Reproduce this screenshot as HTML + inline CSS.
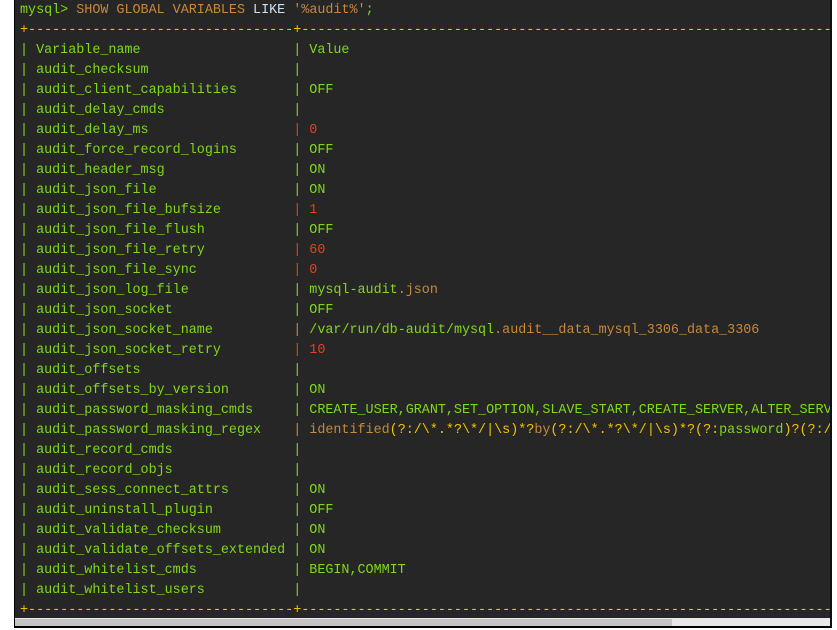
<!DOCTYPE html>
<html><head><meta charset="utf-8"><style>
html,body{margin:0;padding:0;width:837px;height:630px;overflow:hidden;background:#fff}
#t{position:absolute;left:15px;top:0;width:816px;height:618px;background:#262626;overflow:hidden}
pre{margin:0;position:absolute;left:5px;top:1px;font-family:"Liberation Mono",monospace;font-size:13.4px;line-height:20px;color:#7fd81a;white-space:pre}
.o{color:#c8883a}.y{color:#f2c200}.r{color:#e8401c}.w{color:#cfe0f0}
#sb{position:absolute;left:15px;top:618px;width:816px;height:9px;background:#e8e8e8}
#th{position:absolute;left:15px;top:619px;width:657px;height:7px;background:#c4c4c4}
#bl{position:absolute;left:15px;top:626px;width:816px;height:2px;background:#000}
#br{position:absolute;left:830px;top:0;width:2px;height:628px;background:#111}
#bll{position:absolute;left:14px;top:0;width:1px;height:628px;background:#000}
</style></head><body>
<div id="t"><pre>mysql&gt; <span class="o">SHOW GLOBAL VARIABLES</span> <span class="w">LIKE</span> <span class="o">'%audit%'</span>;
<span class="y">+---------------------------------+--------------------------------------------------------------------------------------</span>
| Variable_name                   | Value
| audit_checksum                  |
| audit_client_capabilities       | OFF
| audit_delay_cmds                |
| audit_delay_ms                  <span class="r">| 0</span>
| audit_force_record_logins       | OFF
| audit_header_msg                | ON
| audit_json_file                 | ON
| audit_json_file_bufsize         <span class="r">| 1</span>
| audit_json_file_flush           | OFF
| audit_json_file_retry           <span class="r">| 60</span>
| audit_json_file_sync            <span class="r">| 0</span>
| audit_json_log_file             | mysql-audit<span class="o">.json</span>
| audit_json_socket               | OFF
| audit_json_socket_name          <span class="o">|</span> /var/run/db-audit/mysql<span class="o">.audit__data_mysql_3306_data_3306</span>
| audit_json_socket_retry         <span class="r">| 10</span>
| audit_offsets                   |
| audit_offsets_by_version        | ON
| audit_password_masking_cmds     | CREATE_USER,GRANT,SET_OPTION,SLAVE_START,CREATE_SERVER,ALTER_SERVER
| audit_password_masking_regex    <span class="o">| identified</span><span class="y">(?:/\*.*?\*/|\s)*?</span><span class="o">by</span><span class="y">(?:/\*.*?\*/|\s)*?(?:</span>password<span class="y">)?(?:/\</span>
| audit_record_cmds               |
| audit_record_objs               |
| audit_sess_connect_attrs        | ON
| audit_uninstall_plugin          | OFF
| audit_validate_checksum         | ON
| audit_validate_offsets_extended | ON
| audit_whitelist_cmds            | BEGIN,COMMIT
| audit_whitelist_users           |
<span class="y">+---------------------------------+--------------------------------------------------------------------------------------</span></pre></div>
<div id="sb"></div><div id="th"></div><div id="bl"></div><div id="br"></div><div id="bll"></div>
</body></html>
